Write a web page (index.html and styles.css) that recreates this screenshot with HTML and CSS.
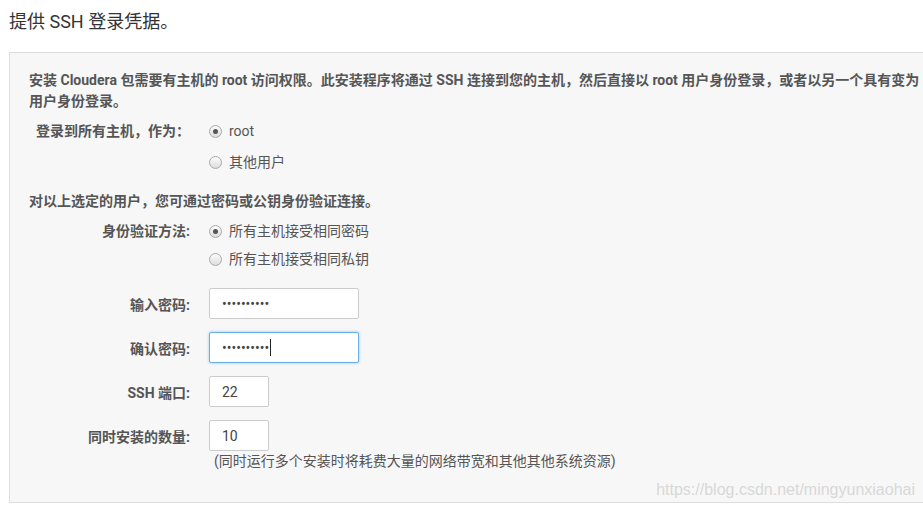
FILE: index.html
```html
<!DOCTYPE html>
<html lang="zh-CN">
<head>
  <meta charset="UTF-8">
  <meta name="viewport" content="width=device-width, initial-scale=1.0">
  <title>提供 SSH 登录凭据</title>
  <link rel="stylesheet" href="styles.css">
</head>
<body>
  <h1>提供 SSH 登录凭据。</h1>

  <div class="panel">
    <p class="intro">安装 Cloudera 包需要有主机的 root 访问权限。此安装程序将通过 SSH 连接到您的主机，然后直接以 root 用户身份登录，或者以另一个具有变为用户身份登录。</p>

    <div class="field radio-field login-as">
      <label class="field-label">登录到所有主机，作为：</label>
      <div class="options">
        <label class="option"><span class="radio checked"></span>root</label>
        <label class="option"><span class="radio"></span>其他用户</label>
      </div>
    </div>

    <p class="intro note">对以上选定的用户，您可通过密码或公钥身份验证连接。</p>

    <div class="field radio-field auth-method">
      <label class="field-label">身份验证方法:</label>
      <div class="options">
        <label class="option"><span class="radio checked"></span>所有主机接受相同密码</label>
        <label class="option"><span class="radio"></span>所有主机接受相同私钥</label>
      </div>
    </div>

    <div class="inputs">
      <div class="field">
        <label class="field-label">输入密码:</label>
        <input class="text-input wide" type="password" value="0123456789">
      </div>
      <div class="field">
        <label class="field-label">确认密码:</label>
        <div class="input-wrap">
          <input class="text-input wide focused" type="password" value="0123456789">
          <span class="caret"></span>
        </div>
      </div>
      <div class="field">
        <label class="field-label">SSH 端口:</label>
        <input class="text-input narrow" type="text" value="22">
      </div>
      <div class="field">
        <label class="field-label">同时安装的数量:</label>
        <input class="text-input narrow" type="text" value="10">
      </div>
      <div class="field">
        <span></span>
        <span class="hint">(同时运行多个安装时将耗费大量的网络带宽和其他其他系统资源)</span>
      </div>
    </div>
  </div>

  <div class="watermark">https://blog.csdn.net/mingyunxiaohai</div>
</body>
</html>
```

FILE: styles.css
```css
body {
  font-family: Roboto, "Noto Sans CJK SC", sans-serif;
  font-size: 14px;
  color: #555;
  margin: 0;
  padding: 0 0 0 9px;
  background: #fff;
}

h1 {
  font-size: 18px;
  font-weight: normal;
  line-height: 24px;
  color: #333;
  margin: 10px 0 18px;
}

.panel {
  background: #f7f7f7;
  border: 1px solid #ddd;
  border-right: none;
  padding: 17px 0 31px;
}

.intro {
  margin: 0;
  padding-left: 19px;
  line-height: 21px;
  font-weight: bold;
  color: #555;
}

.intro.note {
  margin-top: 13px;
}

.field {
  display: grid;
  grid-template-columns: 161px 1fr;
  column-gap: 19px;
  align-items: center;
  padding-left: 19px;
}

.field-label {
  text-align: right;
  font-weight: bold;
  color: #555;
  align-self: start;
}

.login-as {
  margin-top: 4px;
}

.login-as .field-label,
.login-as .option {
  line-height: 31px;
}

.auth-method {
  margin-top: 5px;
}

.auth-method .field-label,
.auth-method .option {
  line-height: 28px;
}

.options {
  display: flex;
  flex-direction: column;
}

.option {
  display: flex;
  align-items: center;
  gap: 7px;
}

.radio {
  width: 11px;
  height: 11px;
  border: 1px solid #a9a9a9;
  border-radius: 50%;
  background: linear-gradient(#fdfdfd, #dcdcdc);
  display: inline-flex;
  align-items: center;
  justify-content: center;
}

.radio.checked::after {
  content: "";
  width: 5px;
  height: 5px;
  border-radius: 50%;
  background: #555;
}

.inputs {
  margin-top: 15px;
  display: flex;
  flex-direction: column;
  gap: 13px;
}

.inputs .field-label {
  align-self: center;
}

.text-input {
  box-sizing: border-box;
  height: 31px;
  border: 1px solid #ccc;
  border-radius: 2px;
  background: #fff;
  padding: 0 12px;
  font-family: Roboto, "Noto Sans CJK SC", sans-serif;
  font-size: 14px;
  color: #444;
  outline: none;
}

.text-input.wide {
  width: 150px;
}

.text-input.narrow {
  width: 60px;
}

.text-input.focused {
  border-color: #66afe9;
  box-shadow: 0 0 3px rgba(102, 175, 233, 0.7);
}

.input-wrap {
  position: relative;
  width: 150px;
}

.input-wrap .text-input {
  display: block;
}

.caret {
  position: absolute;
  left: 61px;
  top: 7px;
  width: 1px;
  height: 17px;
  background: #222;
}

.inputs .field:last-child {
  margin-top: -13px;
}

.hint {
  line-height: 20px;
  padding-left: 5px;
  color: #555;
}

.watermark {
  position: absolute;
  right: 8px;
  top: 480px;
  font-family: "Liberation Sans", Arial, sans-serif;
  font-size: 16px;
  line-height: 20px;
  color: #d8d8d8;
}
```
